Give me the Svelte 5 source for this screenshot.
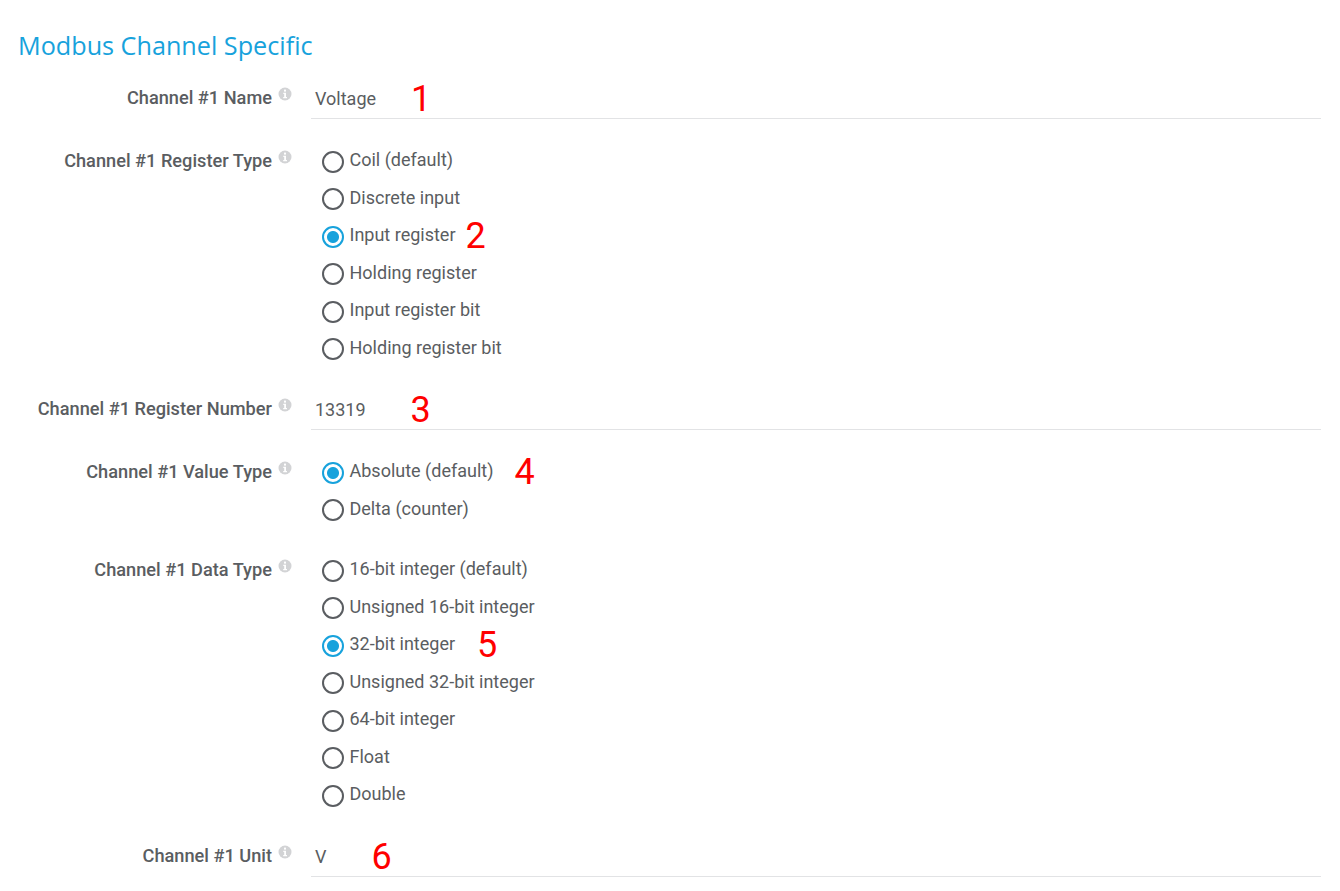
<script>
  const rows = [
    { label: "Channel #1 Name", value: "Voltage", mark: "1", gap: 35 },
    {
      label: "Channel #1 Register Type",
      options: ["Coil (default)", "Discrete input", "Input register", "Holding register", "Input register bit", "Holding register bit"],
      selected: 2, mark: "2", gap: 10
    },
    { label: "Channel #1 Register Number", value: "13319", mark: "3", gap: 45 },
    {
      label: "Channel #1 Value Type",
      options: ["Absolute (default)", "Delta (counter)"],
      selected: 0, mark: "4", gap: 21
    },
    {
      label: "Channel #1 Data Type",
      options: ["16-bit integer (default)", "Unsigned 16-bit integer", "32-bit integer", "Unsigned 32-bit integer", "64-bit integer", "Float", "Double"],
      selected: 2, mark: "5", gap: 22
    },
    { label: "Channel #1 Unit", value: "V", mark: "6", gap: 45 }
  ];
</script>

<div class="page">
  <h2>Modbus Channel Specific</h2>

  {#each rows as row}
    <div class="row" class:text-row={!row.options}>
      <div class="label">
        <span>{row.label}</span>
        <svg class="info" viewBox="0 0 14 14" width="14" height="14">
          <circle cx="7" cy="7" r="6.5" fill="#d2d3d5" />
          <rect x="6" y="2.6" width="2" height="2" fill="#fff" />
          <path d="M5.3 5.8H8V10H9V11.2H5.2V10H6.2V7H5.3Z" fill="#fff" />
        </svg>
      </div>
      {#if row.options}
        <div class="options">
          {#each row.options as opt, i}
            <label class="option">
              <span class="radio" class:checked={i === row.selected}></span>
              <span class="opt-text">{opt}</span>
              {#if i === row.selected}
                <span class="mark" style="margin-left: {row.gap}px">{row.mark}</span>
              {/if}
            </label>
          {/each}
        </div>
      {:else}
        <div class="field">
          <span>{row.value}</span>
          <span class="mark" style="margin-left: {row.gap}px">{row.mark}</span>
        </div>
      {/if}
    </div>
  {/each}
</div>

<style>
  :global(body) {
    margin: 0;
    background: #fff;
  }

  .page {
    width: 1340px;
    height: 891px;
    overflow: hidden;
    box-sizing: border-box;
    padding: 29px 19px 0 0;
    font-family: Roboto, "Liberation Sans", sans-serif;
    font-size: 18px;
    color: #5a5d61;
  }

  h2 {
    margin: 0 0 17px 18px;
    font-family: "Open Sans", "Liberation Sans", sans-serif;
    font-size: 25.2px;
    font-weight: 400;
    line-height: 33px;
    color: #17a2dc;
  }

  .row {
    display: grid;
    grid-template-columns: 292px 1fr;
    column-gap: 19px;
    margin-bottom: 23px;
  }

  .label {
    display: flex;
    justify-content: flex-end;
    align-items: flex-start;
    gap: 6px;
    padding-top: 9px;
    font-size: 18.2px;
    font-weight: 500;
    line-height: 20px;
    color: #5a5d61;
  }

  .info {
    margin-top: -1px;
    flex: none;
  }

  .field {
    display: flex;
    align-items: center;
    height: 38px;
    padding: 1px 0 0 4px;
    border-bottom: 1px solid #e2e3e5;
    line-height: 20px;
  }

  .options {
    display: flex;
    flex-direction: column;
    padding-left: 11px;
  }

  .option {
    display: flex;
    align-items: center;
    height: 37.5px;
  }

  .radio {
    width: 22px;
    height: 22px;
    box-sizing: border-box;
    border: 2px solid #5a5d61;
    border-radius: 50%;
    background: #fff;
    margin-right: 5.5px;
    flex: none;
    position: relative;
    top: 1px;
  }

  .radio.checked {
    border-color: #17a2dc;
    background: radial-gradient(circle, #17a2dc 0 5.5px, #fff 6.5px);
  }

  .opt-text {
    position: relative;
    top: -1px;
  }

  .mark {
    font-family: Roboto, "Liberation Sans", sans-serif;
    font-size: 36px;
    font-weight: 400;
    line-height: 20px;
    color: #f00;
  }
</style>
